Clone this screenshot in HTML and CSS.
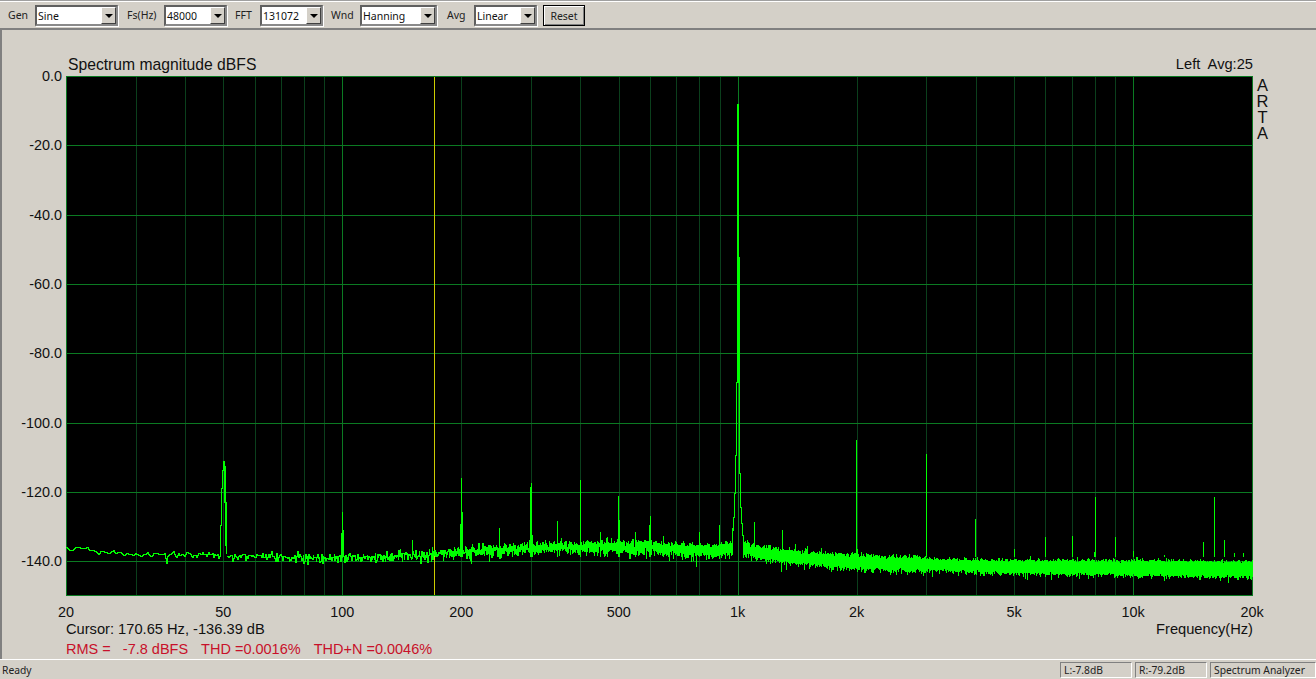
FILE: index.html
```html
<!DOCTYPE html>
<html lang="en">
<head>
    <meta charset="UTF-8">
    <title>ARTA - Spectrum Analyzer</title>
    <link rel="stylesheet" href="styles.css">
</head>
<body>

<div class="window">
    <div class="toolbar">
        <div class="tool-label label-gen">Gen</div>
        <div class="combo combo-gen"><span class="combo-value">Sine</span><span class="combo-btn"><i class="arrow"></i></span></div>
        <div class="tool-label label-fs">Fs(Hz)</div>
        <div class="combo combo-small"><span class="combo-value">48000</span><span class="combo-btn"><i class="arrow"></i></span></div>
        <div class="tool-label label-fft">FFT</div>
        <div class="combo combo-small"><span class="combo-value">131072</span><span class="combo-btn"><i class="arrow"></i></span></div>
        <div class="tool-label label-wnd">Wnd</div>
        <div class="combo combo-wnd"><span class="combo-value">Hanning</span><span class="combo-btn"><i class="arrow"></i></span></div>
        <div class="tool-label label-avg">Avg</div>
        <div class="combo combo-small"><span class="combo-value">Linear</span><span class="combo-btn"><i class="arrow"></i></span></div>
        <button class="btn-reset">Reset</button>
    </div>

    <div class="main">
        <div class="plot-head">
            <span class="plot-title">Spectrum magnitude dBFS</span>
            <span class="plot-info">Left&nbsp; Avg:25</span>
        </div>

        <div class="plot" id="plot">
            <canvas id="spectrum" width="1187" height="520"></canvas>
            <div class="brand"><span>A</span><span>R</span><span>T</span><span>A</span></div>
        </div>

        <div class="freq-axis" id="freqAxis"></div>

        <div class="readout">
            <span>Cursor: 170.65 Hz, -136.39 dB</span>
            <span>Frequency(Hz)</span>
        </div>
        <div class="stats">
            <span>RMS = &nbsp; -7.8 dBFS</span>
            <span>THD =0.0016%</span>
            <span>THD+N =0.0046%</span>
        </div>
    </div>

    <div class="statusbar">
        <div class="status-ready">Ready</div>
        <div class="pane pane-level">L:-7.8dB</div>
        <div class="pane pane-level">R:-79.2dB</div>
        <div class="pane pane-mode">Spectrum Analyzer</div>
    </div>
</div>

<script src="app.js"></script>
</body>
</html>
```

FILE: styles.css
```css
html, body {
    margin: 0;
    padding: 0;
    overflow: hidden;
}
body {
    background-color: #d4d0c8;
    color: #111;
    font-family: 'Liberation Sans', Arial, sans-serif;
    font-size: 14.67px;
}
.window {
    width: 1316px;
    height: 679px;
    display: flex;
    flex-direction: column;
}

/* toolbar */
.toolbar {
    height: 28px;
    box-sizing: border-box;
    display: flex;
    align-items: flex-start;
    column-gap: 6px;
    padding: 4px 0 0 8px;
    border-top: 1px solid #a0a0a0;
    box-shadow: inset 0 1px 0 #fff;
    font-family: 'Noto Sans', Tahoma, sans-serif;
    font-size: 10.5px;
    flex-shrink: 0;
}
.tool-label {
    box-sizing: border-box;
    line-height: 20px;
    color: #222;
}
.label-gen { width: 21px; }
.label-fs { width: 34px; padding-left: 3px; }
.label-fft { width: 21px; padding-left: 2px; }
.label-wnd { width: 25px; padding-left: 2px; }
.label-avg { width: 25px; padding-left: 4px; }
.combo {
    height: 21px;
    box-sizing: border-box;
    display: flex;
    justify-content: space-between;
    background-color: #fff;
    border: 2px solid #5f5f5f;
    border-right-color: #8a8a8a;
    border-bottom-color: #8a8a8a;
    box-shadow: 1px 1px 0 #fff;
}
.combo-gen { width: 83px; }
.combo-small { width: 63px; }
.combo-wnd { width: 77px; }
.combo-value {
    padding-left: 1px;
    line-height: 18px;
    color: #111;
}
.combo-btn {
    width: 15px;
    display: flex;
    align-items: center;
    justify-content: center;
    background-color: #d4d0c8;
    border: 1px solid;
    border-color: #fff #404040 #404040 #fff;
    box-sizing: border-box;
}
.arrow {
    width: 0;
    height: 0;
    border-left: 4px solid transparent;
    border-right: 4px solid transparent;
    border-top: 4px solid #000;
}
.btn-reset {
    width: 42px;
    height: 21px;
    padding: 0;
    background-color: #d4d0c8;
    border: 1px solid #000;
    box-shadow: inset 1px 1px 0 #fff, inset -1px -1px 0 #808080;
    font: inherit;
    color: #222;
}

/* plot area */
.main {
    flex: 1;
    box-sizing: border-box;
    border-top: 2px solid #808080;
    border-left: 2px solid #808080;
    padding-left: 64px;
}
.plot-head {
    width: 1187px;
    height: 46px;
    display: flex;
    justify-content: space-between;
    align-items: flex-end;
    line-height: 17px;
}
.plot-title {
    padding-left: 2px;
    font-size: 15.7px;
    padding-bottom: 3px;
}
.plot-info {
    padding-bottom: 3px;
}
.plot {
    position: relative;
    width: 1187px;
    height: 520px;
}
#spectrum {
    display: block;
}
.y-label {
    position: absolute;
    right: 1191px;
    transform: translateY(-50%);
    white-space: nowrap;
    font-size: 14.4px;
}
.brand {
    position: absolute;
    left: 1190px;
    top: 0;
    width: 13px;
    display: flex;
    flex-direction: column;
    align-items: center;
    font-size: 16.5px;
    line-height: 16px;
    padding-top: 1px;
}
.freq-axis {
    position: relative;
    width: 1187px;
    height: 25px;
}
.x-label {
    position: absolute;
    top: 8px;
    transform: translateX(-50%);
    line-height: 16px;
    font-size: 14.4px;
}
.readout {
    width: 1187px;
    display: flex;
    justify-content: space-between;
    line-height: 17px;
}
.stats {
    display: flex;
    column-gap: 13px;
    margin-top: 3px;
    line-height: 17px;
    font-size: 14.5px;
    color: #c8102a;
}

/* status bar */
.statusbar {
    height: 20px;
    box-sizing: border-box;
    display: flex;
    align-items: flex-start;
    column-gap: 3px;
    padding-top: 2px;
    border-top: 1px solid #fff;
    font-family: 'Noto Sans', Tahoma, sans-serif;
    font-size: 10.3px;
    color: #222;
    flex-shrink: 0;
}
.status-ready {
    flex: 1;
    padding-left: 2px;
    line-height: 16px;
}
.pane {
    box-sizing: border-box;
    height: 16px;
    line-height: 14px;
    padding-left: 3px;
    border: 1px solid;
    border-color: #808080 #fff #fff #808080;
}
.pane-level { width: 72px; }
.pane-mode { width: 106px; }
```

FILE: app.js
```js
// plot geometry, the reference coordinates below are page pixels
const PLOT_X = 66, PLOT_Y = 76, PLOT_W = 1186, PLOT_H = 519;
const PX_PER_DB = 3.465;

const canvas = document.getElementById('spectrum');
const ctx = canvas.getContext('2d');

function freqToX(f) {
    return Math.log10(f / 20) / 3 * PLOT_W;
}

function vline(x, y0, y1) {
    ctx.fillRect(x, Math.min(y0, y1), 1, Math.abs(y1 - y0) + 1);
}

function hline(y) {
    ctx.fillRect(0, y, PLOT_W + 1, 1);
}

// seeded so that every load gives the same trace
let seed = 4711;
function rnd() {
    seed = (seed + 0x6D2B79F5) | 0;
    let t = Math.imul(seed ^ (seed >>> 15), 1 | seed);
    t = (t + Math.imul(t ^ (t >>> 7), 61 | t)) ^ t;
    return ((t ^ (t >>> 14)) >>> 0) / 4294967296;
}
function gauss() {
    return Math.sqrt(-2 * Math.log(rnd() + 1e-9)) * Math.cos(2 * Math.PI * rnd());
}

// noise floor, [Hz, dB]
const floorCurve = [
    [20, -135.9], [30, -138.0], [50, -138.4], [100, -139.1], [170, -137.9],
    [250, -136.6], [300, -135.8], [500, -135.6], [700, -136.3], [900, -137.2],
    [1100, -137.4], [1500, -138.9], [2000, -140.0], [3000, -140.7],
    [5000, -141.4], [10000, -141.6], [20000, -142.0]
];

function floorDb(f) {
    for (let i = 1; i < floorCurve.length; i++) {
        const a = floorCurve[i - 1], b = floorCurve[i];
        if (f <= b[0]) {
            const k = Math.log(f / a[0]) / Math.log(b[0] / a[0]);
            return a[1] + (b[1] - a[1]) * k;
        }
    }
    return floorCurve[floorCurve.length - 1][1];
}

function noiseSigma(f) {
    if (f < 32) return 0.4;
    if (f < 120) return 0.7;
    if (f < 200) return 0.9;
    if (f < 3000) return 1.05;
    return 0.85;
}

function drawGrid() {
    ctx.fillStyle = '#000';
    ctx.fillRect(0, 0, canvas.width, canvas.height);

    // minor decade lines
    ctx.fillStyle = '#0b3f1c';
    for (const decade of [10, 100, 1000, 10000]) {
        for (let m = 2; m < 10; m++) {
            const f = decade * m;
            if (f > 20 && f < 20000) vline(Math.round(freqToX(f)), 0, PLOT_H);
        }
    }

    ctx.fillStyle = '#0b7a22';
    for (const f of [100, 1000, 10000]) vline(Math.round(freqToX(f)), 0, PLOT_H);
    for (let db = 20; db <= 140; db += 20) hline(Math.round(db * PX_PER_DB));

    // frame
    vline(0, 0, PLOT_H);
    vline(PLOT_W, 0, PLOT_H);
    hline(0);
    hline(PLOT_H);

    // cursor
    ctx.fillStyle = '#cccc00';
    vline(Math.round(freqToX(170.65)), 1, PLOT_H - 1);
}

function drawTrace() {
    ctx.fillStyle = '#00ff00';
    const binHz = 48000 / 131072;
    let px = null, py = null;
    for (let f = 20; f <= 20000; f += binHz) {
        const x = freqToX(f);
        const pageX = x + PLOT_X;

        // the tones are drawn by hand, leave a gap for them
        if ((pageX > 732 && pageX < 743) || (pageX > 220 && pageX < 226)) {
            px = null;
            continue;
        }

        let n = gauss() * noiseSigma(f);
        if (n > 0) n *= 0.8;
        if (f > 120 && rnd() < 0.006) n -= 1.6;

        let y = -floorDb(f) * PX_PER_DB - n * PX_PER_DB;
        y -= 9 * Math.exp(-Math.abs(pageX - 738) / 11);
        const ix = Math.round(x), iy = Math.round(y);

        if (px !== null) {
            for (let c = px; c <= ix; c++) {
                const k = ix === px ? 1 : (c - px) / (ix - px);
                const mid = Math.round(py + (iy - py) * k);
                const prev = ix === px ? py : Math.round(py + (iy - py) * Math.max(0, c - px - 1) / (ix - px));
                vline(c, prev, mid);
            }
        }
        px = ix;
        py = iy;
    }
}

// harmonics, [page x, page y of the top]
const spikes = [
    [341, 533], [342, 512], [343, 530], [412, 540],
    [460, 524], [461, 478], [462, 512], [499, 528],
    [530, 487], [531, 483], [532, 535], [557, 521], [580, 480], [600, 532],
    [618, 496], [619, 520], [635, 532], [649, 525], [650, 516], [663, 536],
    [699, 532], [719, 525], [754, 522], [782, 530], [795, 544], [807, 546],
    [856, 440], [857, 549], [926, 454], [975, 519], [1014, 549], [1045, 537],
    [1072, 536], [1094, 552], [1095, 497], [1115, 537], [1133, 551], [1164, 555],
    [1203, 542], [1214, 497], [1224, 540], [1234, 553], [1243, 553]
];

// outlines of the 50 Hz and 1 kHz tones, [page x, top, bottom]
const tones = [
    [220, 525, 555], [221, 488, 525], [222, 470, 488], [223, 461, 470],
    [224, 461, 502], [225, 466, 545], [226, 502, 553],
    [737, 104, 382], [738, 104, 382], [739, 257, 382],
    [736, 382, 455], [735, 455, 493], [734, 493, 517], [733, 517, 530], [732, 528, 552],
    [739, 382, 473], [740, 473, 507], [741, 507, 523], [742, 523, 535], [743, 535, 554]
];

function drawSpikes() {
    ctx.fillStyle = '#00ff00';
    for (const s of spikes) vline(s[0] - PLOT_X, s[1] - PLOT_Y, 556 - PLOT_Y);
    for (const t of tones) vline(t[0] - PLOT_X, t[1] - PLOT_Y, t[2] - PLOT_Y);
}

function addLabels() {
    const plot = document.getElementById('plot');
    for (let db = 0; db <= 140; db += 20) {
        const el = document.createElement('div');
        el.className = 'y-label';
        el.textContent = db === 0 ? '0.0' : '-' + db + '.0';
        el.style.top = db * PX_PER_DB + 'px';
        plot.appendChild(el);
    }

    const axis = document.getElementById('freqAxis');
    const ticks = [[20, '20'], [50, '50'], [100, '100'], [200, '200'], [500, '500'],
        [1000, '1k'], [2000, '2k'], [5000, '5k'], [10000, '10k'], [20000, '20k']];
    for (const t of ticks) {
        const el = document.createElement('div');
        el.className = 'x-label';
        el.textContent = t[1];
        el.style.left = freqToX(t[0]) + 'px';
        axis.appendChild(el);
    }
}

drawGrid();
drawTrace();
drawSpikes();
addLabels();
```
